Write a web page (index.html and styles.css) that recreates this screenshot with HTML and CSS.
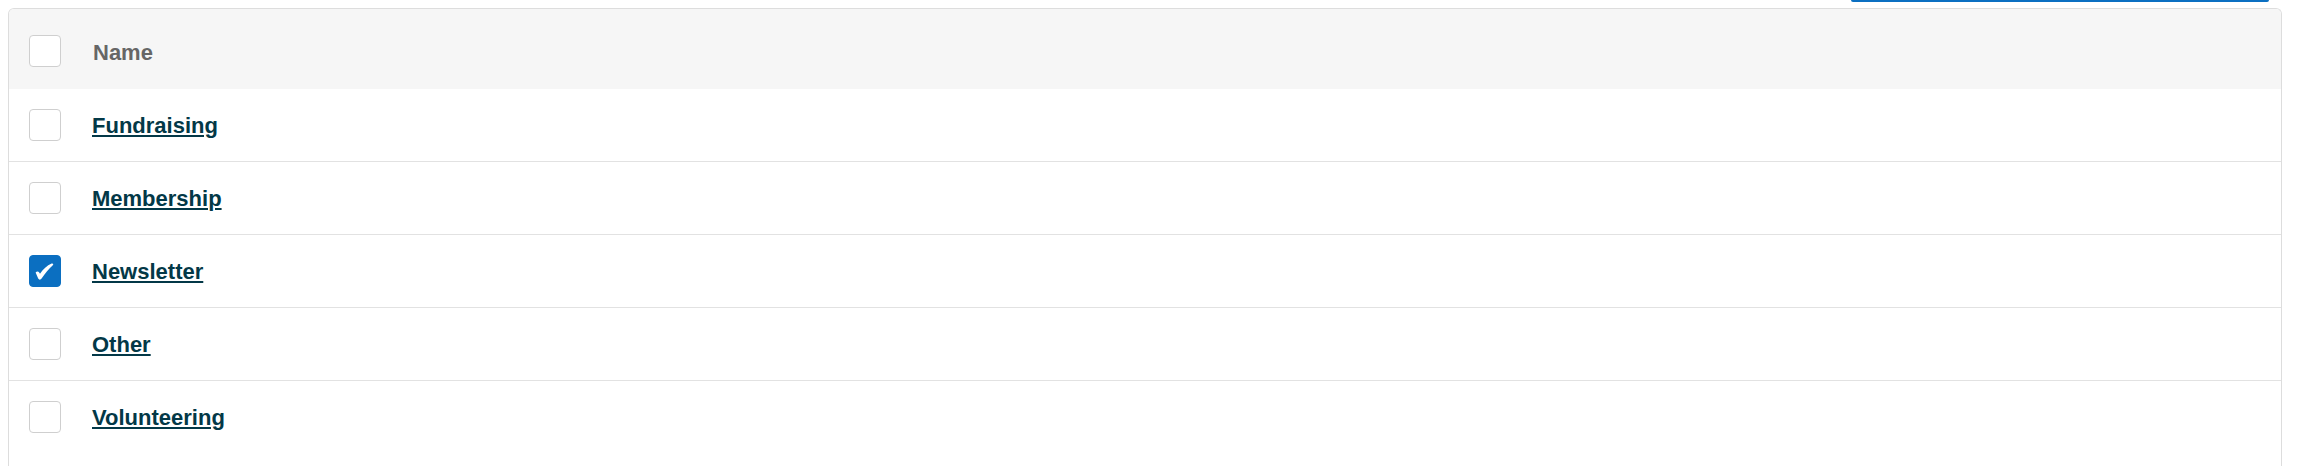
FILE: index.html
```html
<!DOCTYPE html>
<html lang="en">
<head>
<meta charset="utf-8">
<title>Groups</title>
<link rel="stylesheet" href="styles.css">
</head>
<body>
<div class="page">
  <div class="toolbar">
    <button class="primary-btn" type="button" aria-label="Add"></button>
  </div>
  <div class="table">
    <div class="row head">
      <div class="cell-check"><span class="box"></span></div>
      <div class="cell-name"><span class="col-title">Name</span></div>
    </div>
    <div class="row">
      <div class="cell-check"><span class="box"></span></div>
      <div class="cell-name"><a class="link" href="#">Fundraising</a></div>
    </div>
    <div class="row">
      <div class="cell-check"><span class="box"></span></div>
      <div class="cell-name"><a class="link" href="#">Membership</a></div>
    </div>
    <div class="row">
      <div class="cell-check">
        <span class="box checked">
          <svg viewBox="0 0 32 32" width="32" height="32" aria-hidden="true">
            <path d="M6.6 17.6 C7.6 16.2 9.2 16 10.2 17.4 L11 18.8 C14 14.2 18 10.6 22.6 8.6 C24 8.1 24.8 9.3 23.8 10.2 C19.6 14 15.8 18.8 12.6 23.6 C11.6 25 10 25 9.2 23.6 Z" fill="#fff"/>
          </svg>
        </span>
      </div>
      <div class="cell-name"><a class="link" href="#">Newsletter</a></div>
    </div>
    <div class="row">
      <div class="cell-check"><span class="box"></span></div>
      <div class="cell-name"><a class="link" href="#">Other</a></div>
    </div>
    <div class="row last">
      <div class="cell-check"><span class="box"></span></div>
      <div class="cell-name"><a class="link" href="#">Volunteering</a></div>
    </div>
  </div>
</div>
</body>
</html>
```

FILE: styles.css
```css
html, body {
  margin: 0;
  padding: 0;
  background: #ffffff;
  overflow: hidden;
}

body {
  font-family: "Liberation Sans", Arial, Helvetica, sans-serif;
}

.page {
  padding: 0 16px 0 8px;
}

.toolbar {
  display: flex;
  justify-content: flex-end;
  height: 2px;
  padding-right: 13px;
}

.primary-btn {
  display: block;
  width: 418px;
  height: 2px;
  padding: 0;
  border: 0;
  border-radius: 0 0 3px 3px;
  background: #0b6fc1;
}

.table {
  margin-top: 6px;
  border: 1px solid #dddddd;
  border-bottom: 0;
  border-radius: 6px 6px 0 0;
  padding-bottom: 60px;
  overflow: hidden;
}

.row {
  display: grid;
  grid-template-columns: 83px 1fr;
  align-items: center;
  height: 72px;
  border-bottom: 1px solid #e2e2e2;
}

.row.head {
  height: 76px;
  padding-top: 4px;
  border-bottom: 0;
  background: #f6f6f6;
}

.row.last {
  border-bottom: 0;
}

.cell-check {
  display: flex;
  align-items: center;
  padding-left: 20px;
}

.box {
  display: block;
  box-sizing: border-box;
  width: 32px;
  height: 32px;
  border: 1px solid #cfcfcf;
  border-radius: 4px;
  background: #ffffff;
  position: relative;
  overflow: hidden;
}

.box.checked {
  border-color: #0b6fc1;
  background: #0b6fc1;
}

.box.checked svg {
  display: block;
  margin: -1px;
}

.cell-name {
  display: flex;
  align-items: center;
}

.col-title {
  font-size: 22px;
  font-weight: 700;
  color: #666666;
  padding-left: 1px;
  padding-top: 3px;
}

.link {
  font-size: 22px;
  font-weight: 700;
  color: #033847;
  padding-top: 1px;
  text-decoration: underline;
  text-decoration-thickness: 2px;
  text-underline-offset: 2px;
}
```
